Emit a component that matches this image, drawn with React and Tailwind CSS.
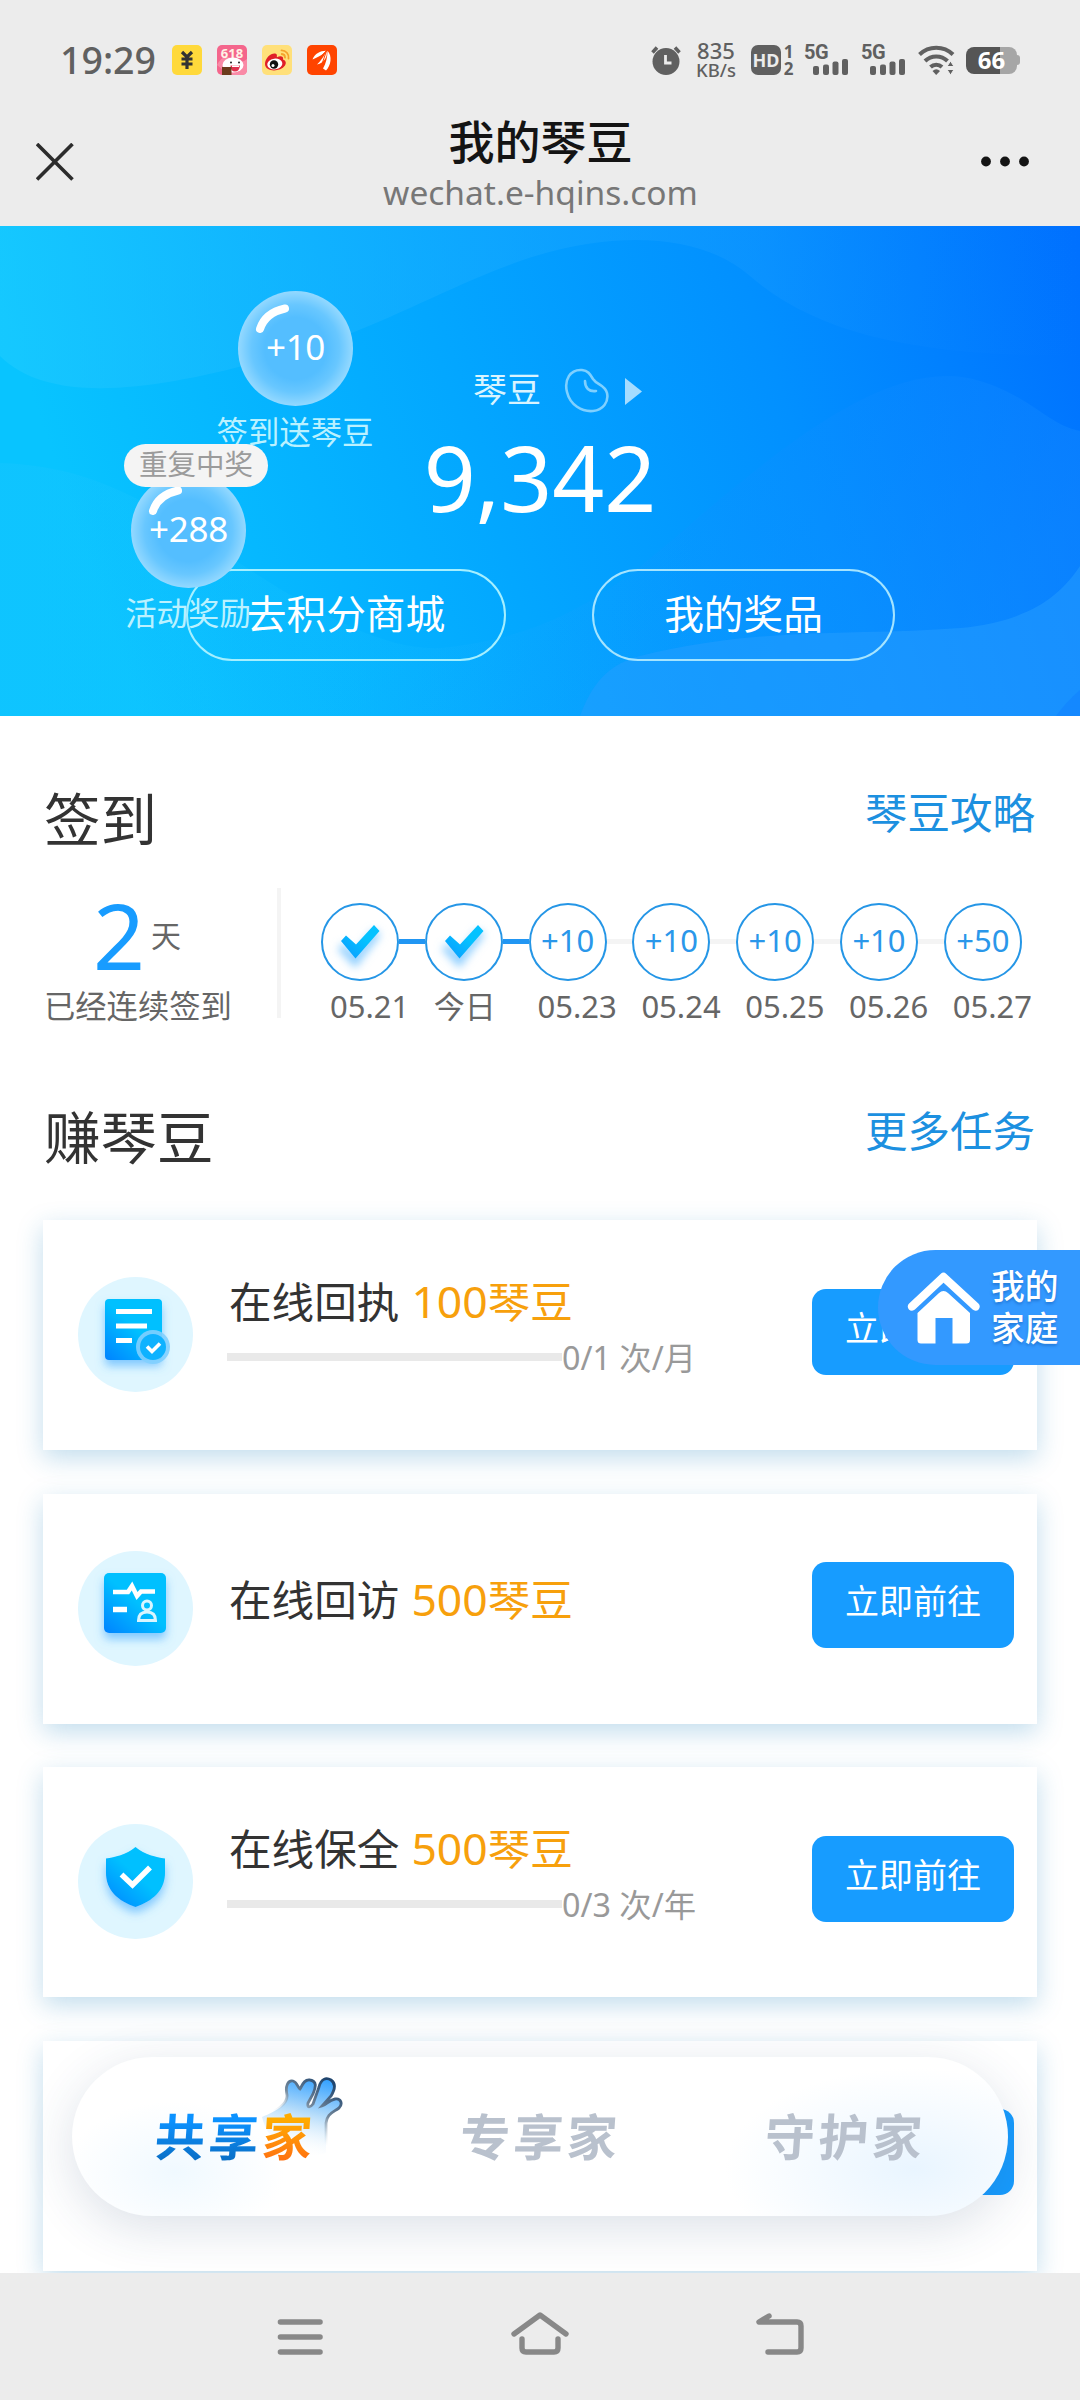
import React from "react";

const SANS = "font-['Noto_Sans','Noto_Sans_CJK_SC',sans-serif]";

function AppIcons() {
  return (
    <div className="flex gap-[15px]">
      <svg width="30" height="30" viewBox="0 0 30 30">
        <rect width="30" height="30" rx="5" fill="#ffd93b" />
        <path d="M10 7l5 5 5-5M15 12v12M9.5 14h11M9.5 19h11" stroke="#333" strokeWidth="3.2" fill="none" />
      </svg>
      <svg width="30" height="30" viewBox="0 0 30 30">
        <rect width="30" height="30" rx="5" fill="#f4668c" />
        <path d="M0 20Q6 8 15 14T30 14V25Q30 30 25 30H12Z" fill="#f98aa6" />
        <text x="15" y="13" textAnchor="middle" fontSize="13" fontWeight="700" fill="#fff3e6" className={SANS}>618</text>
        <ellipse cx="16" cy="20" rx="10.5" ry="7.5" fill="#fff" />
        <circle cx="14" cy="17.5" r="1" fill="#222" />
        <circle cx="22" cy="17.5" r="1" fill="#222" />
        <path d="M13.500 20.500h9.500q-.5 6-5 6t-4.500-6z" fill="#e0304e" />
        <path d="M15 20.500h7v1.500h-7z" fill="#fff" />
        <rect x="5" y="22" width="9.500" height="8" fill="#6b3b1c" />
      </svg>
      <svg width="30" height="30" viewBox="0 0 30 30">
        <rect width="30" height="30" rx="5" fill="#ffe07a" />
        <path d="M3 19C3 13 9 8 13 8.500C16 9 14.500 12 15 12.300C18 10.500 22 11 21 14.500C24 15.500 24.500 18 23 20.500C18 27.500 3 27 3 19Z" fill="#e01f28" />
        <ellipse cx="12.800" cy="19" rx="7.600" ry="5.400" transform="rotate(-8 12.800 19)" fill="#fff" />
        <circle cx="12" cy="19.500" r="4.200" fill="#111" />
        <circle cx="11" cy="20.500" r="1.500" fill="#fff" />
        <path d="M19.500 5.300A7 7 0 0 1 26.500 13.500M19.800 9A3.500 3.500 0 0 1 23 12.600" stroke="#f5a32b" strokeWidth="1.800" fill="none" strokeLinecap="round" />
      </svg>
      <svg width="30" height="30" viewBox="0 0 30 30">
        <rect width="30" height="30" rx="5" fill="#ff4400" />
        <path d="M5.500 14.500C8 8.500 13 6 19 5.800C16.500 9.500 11.500 12 5.500 14.500Z" fill="#fff" />
        <path d="M10 19.500C13.500 16.500 17 11.500 19.500 5.800C21 11 17.500 18 10 19.500Z" fill="#fff" />
        <path d="M16 23.500C19 18.500 20.500 12 20.500 5.800C25.500 11 24 20.500 19 25.500Z" fill="#fff" />
        <path d="M8.500 17L19.500 5.800L14 22" stroke="#ff4400" strokeWidth="1" fill="none" />
      </svg>
    </div>
  );
}

function Signal() {
  return (
    <div className="h-[30px] w-[45px]">
      <div className="h-[14px] text-[20px] leading-[15px] font-bold tracking-[-0.5px] font-['Roboto']">5G</div>
      <svg className="ml-[9px]" width="36" height="16" viewBox="0 14 36 16" fill="#606060">
        <rect x="0" y="21" width="6" height="9" rx="2" />
        <rect x="10" y="19.500" width="6" height="10.500" rx="2" />
        <rect x="19.500" y="16.500" width="6" height="13.500" rx="2" />
        <rect x="29" y="14" width="6" height="16" rx="2" />
      </svg>
    </div>
  );
}

function StatusBar() {
  return (
    <div className="flex h-[120px] items-center pl-[60px] pr-[60px] text-[#606060]">
      <div className="w-[112px] text-[37.500px] leading-[40px] font-medium">19:29</div>
      <AppIcons />
      <div className="ml-auto flex items-center">
        <svg width="30" height="30" viewBox="0 0 30 30">
          <circle cx="15" cy="16.500" r="13.500" fill="#606060" />
          <path d="M1.500 7.500L6 2.500M28.500 7.500L24 2.500" stroke="#606060" strokeWidth="3.500" />
          <path d="M14.500 10v8h6" stroke="#ececec" strokeWidth="2.800" fill="none" />
        </svg>
        <div className="ml-[13px] w-[44px] text-center font-medium">
          <div className="text-[22px] leading-[19px]">835</div>
          <div className="text-[18.500px] leading-[20px]">KB/s</div>
        </div>
        <div className="ml-[13px] flex h-[30px] w-[30px] items-center justify-center rounded-[7px] bg-[#606060] text-[18px] leading-none font-bold text-[#ececec]">HD</div>
        <div className="ml-[2px] w-[11px] text-center text-[17px] leading-[17px] font-bold">
          <div>1</div>
          <div>2</div>
        </div>
        <div className="ml-[10px]"><Signal /></div>
        <div className="ml-[12px]"><Signal /></div>
        <svg className="ml-[12px]" width="38" height="30" viewBox="0 0 38 30" fill="none" stroke="#606060" strokeWidth="4">
          <path d="M1.500 9.500A24 24 0 0 1 35 9.500M7 16A16 16 0 0 1 29.500 16M12.500 22A8.500 8.500 0 0 1 24 22" />
          <path d="M14.500 26Q18.200 22.500 22 26L18.200 30Z" fill="#606060" stroke="none" />
          <path d="M29 21.500l3.500-5.500 3.500 5.500zM29 24.500h7l-3.500 5.500z" fill="#606060" stroke="#ececec" strokeWidth="1" />
        </svg>
        <div className="ml-[10px] flex items-center">
          <div className="flex h-[27px] w-[51px] items-center justify-center rounded-[8px] bg-[linear-gradient(90deg,#555_66%,#a6a6a6_66%)] text-[24px] leading-none font-bold text-white">66</div>
          <div className="h-[10px] w-[3px] rounded-r bg-[#a6a6a6]" />
        </div>
      </div>
    </div>
  );
}

function TitleBar() {
  return (
    <div className="flex h-[106px] px-[36px]">
      <svg className="mt-[23px]" width="38" height="38" viewBox="0 0 38 38" stroke="#2c2c2c" strokeWidth="3.600">
        <path d="M1 1L36.500 36.500M36.500 1L1 36.500" />
      </svg>
      <div className="flex-1 pl-[26px] text-center">
        <div className="-mt-[8px] text-[46px] leading-[58px] font-medium text-[#141414]">我的琴豆</div>
        <div className="text-[33.500px] leading-[44px] text-[#777]">wechat.e-hqins.com</div>
      </div>
      <svg className="mt-[36px] mr-[3px]" width="60" height="12" viewBox="0 0 60 12" fill="#141414">
        <circle cx="5" cy="5.500" r="4.900" />
        <circle cx="24" cy="5.500" r="4.900" />
        <circle cx="43" cy="5.500" r="4.900" />
      </svg>
    </div>
  );
}

function HeroWaves() {
  return (
    <svg className="absolute inset-0" width="1080" height="490" viewBox="0 0 1080 490">
      <defs>
        <linearGradient id="sky" x1="0" y1="0.150" x2="1" y2="0">
          <stop offset="0" stopColor="#08c4ff" />
          <stop offset="0.380" stopColor="#03a7ff" />
          <stop offset="0.680" stopColor="#0290ff" />
          <stop offset="1" stopColor="#0070ff" />
        </linearGradient>
        <linearGradient id="lobe" gradientUnits="userSpaceOnUse" x1="600" y1="200" x2="900" y2="480">
          <stop offset="0" stopColor="#168cff" stopOpacity="0.050" />
          <stop offset="1" stopColor="#168cff" stopOpacity="0.700" />
        </linearGradient>
        <linearGradient id="top" x1="0" y1="0" x2="1" y2="0">
          <stop offset="0" stopColor="#1ecbff" stopOpacity="0.600" />
          <stop offset="0.700" stopColor="#1a9bff" stopOpacity="0.350" />
          <stop offset="1" stopColor="#0a7cff" stopOpacity="0" />
        </linearGradient>
        <linearGradient id="left" x1="0" y1="0" x2="1" y2="0">
          <stop offset="0" stopColor="#1ac8ff" stopOpacity="0.350" />
          <stop offset="1" stopColor="#1ac8ff" stopOpacity="0" />
        </linearGradient>
      </defs>
      <rect width="1080" height="490" fill="url(#sky)" />
      <path d="M0 0H1080V130C920 130 820 110 750 50C700 6 610 4 520 35C450 60 400 90 330 115C200 155 60 190 0 130Z" fill="url(#top)" />
      <path d="M0 237C80 240 130 265 200 310C300 380 380 425 440 422C560 410 620 360 700 290C800 205 900 130 980 155C1030 170 1050 200 1080 205V490H0Z" fill="url(#lobe)" opacity="0.600" />
      <path d="M0 237C80 240 130 265 200 310C300 380 380 425 440 422C560 410 620 360 700 290V490H0Z" fill="url(#left)" />
      <path d="M580 490C588 470 600 440 640 430C760 400 860 410 960 402C1030 395 1060 370 1080 340V490Z" fill="#259dff" opacity="0.500" />
      <path d="M1056 490Q1066 476 1080 464V490Z" fill="#0f7fff" opacity="0.500" />
    </svg>
  );
}

function Bubble({ text }) {
  return (
    <div className="relative flex h-[115px] w-[115px] items-center justify-center rounded-full bg-[radial-gradient(circle_at_50%_50%,#54beff_38%,#68c7ff_54%,#92d8ff_70%)] text-[35px] leading-none text-white">
      <svg className="absolute left-[11px] top-[5px]" width="48" height="42" viewBox="0 0 48 42">
        <path d="M11 33Q16 17 36 12.500" stroke="#fff" strokeWidth="8" strokeLinecap="round" fill="none" />
      </svg>
      <span className="relative -mt-[4px] ml-[1px] tracking-[-0.300px]">{text}</span>
    </div>
  );
}

function Hero() {
  return (
    <section className="relative h-[490px] overflow-hidden text-white">
      <HeroWaves />
      <div className="relative pt-[141px]">
        <div className="flex h-[44px] items-center pl-[473px]">
          <span className="text-[34px] leading-[44px] text-[#d9f4ff]">琴豆</span>
          <svg className="ml-[23px] mt-[4px]" width="46" height="46" viewBox="0 0 46 46" fill="none" stroke="#7fd0ff" strokeWidth="2.600">
            <path d="M18 2C6 1 0 12 3 24C6 37 18 44 29 43C39 42 45 34 43 25C41 17 33 17 29 11C26 6 24 2.500 18 2Z" />
            <path d="M21 13C21 20 25 24 32 23" strokeLinecap="round" />
          </svg>
          <svg className="ml-[15px] mt-[5px]" width="17" height="27" viewBox="0 0 17 27">
            <path d="M0 0L17 13.500L0 27Z" fill="#a5dcff" />
          </svg>
        </div>
        <div className="mt-[20px] h-[92px] text-center text-[91px] leading-[92px]">9,342</div>
        <div className="mt-[46px] flex gap-[86px] pl-[186px] text-[39.700px] leading-[50px]">
          <button className="flex h-[92px] w-[320px] items-center justify-center rounded-full border-2 border-[#a5efff] pb-[2px]">去积分商城</button>
          <button className="flex h-[92px] w-[303px] items-center justify-center rounded-full border-2 border-[#a5e4ff] pb-[2px]">我的奖品</button>
        </div>
      </div>
      <div className="absolute left-[195px] top-[65px] flex w-[200px] flex-col items-center">
        <Bubble text="+10" />
        <div className="mt-[6px] text-[31.400px] leading-[40px] text-[#baf1ff]">签到送琴豆</div>
      </div>
      <div className="absolute left-[88px] top-[247px] flex w-[200px] flex-col items-center">
        <Bubble text="+288" />
        <div className="mt-[5px] text-[31.400px] leading-[40px] text-[#baf1ff]">活动奖励</div>
      </div>
      <div className="absolute left-[124px] top-[218px] flex h-[43px] w-[144px] items-center justify-center rounded-full bg-[#f4f4f4] pb-[3px] text-[28.500px] leading-none text-[#9b9b9b]">重复中奖</div>
    </section>
  );
}

function SectionHead({ title, link }) {
  return (
    <div className="flex h-[80px] items-center justify-between pl-[44px] pr-[45px]">
      <h2 className="-mt-[1px] text-[56.500px] leading-[80px] text-[#333]">{title}</h2>
      <a className="-mt-[15px] text-[42.500px] leading-[60px] text-[#1c90e0]">{link}</a>
    </div>
  );
}

function Check() {
  return (
    <svg width="56" height="60" viewBox="0 0 56 60" className="mt-[6px] overflow-visible">
      <defs>
        <linearGradient id="chk" x1="0" y1="1" x2="1" y2="0">
          <stop offset="0" stopColor="#0a98ff" />
          <stop offset="0.600" stopColor="#05c2ff" />
        </linearGradient>
        <filter id="soft" x="-50%" y="-50%" width="200%" height="200%"><feGaussianBlur stdDeviation="4" /></filter>
      </defs>
      <path d="M9 31L23 46L45 17" stroke="#8fcfff" strokeWidth="9" fill="none" filter="url(#soft)" />
      <path d="M9 26L14 20.500L24 29.500L42 10L47.500 16L23.500 43.500Z" fill="url(#chk)" />
    </svg>
  );
}

const DAYS = [
  { date: "05.21", done: true },
  { date: "今日", done: true },
  { date: "05.23", bonus: "+10" },
  { date: "05.24", bonus: "+10" },
  { date: "05.25", bonus: "+10" },
  { date: "05.26", bonus: "+10" },
  { date: "05.27", bonus: "+50" },
];

function SignIn() {
  return (
    <section className="pt-[64px]">
      <SectionHead title="签到" link="琴豆攻略" />
      <div className="flex h-[172px] pt-[28px]">
        <div className="w-[277px] shrink-0">
          <div className="flex h-[92px] items-start pl-[93px]">
            <span className="mt-[1px] text-[91px] leading-[92px] text-[#189cff]">2</span>
            <span className="ml-[6px] mt-[26px] text-[30px] leading-[44px] text-[#666]">天</span>
          </div>
          <div className="mt-[6px] pl-[44px] text-[31.300px] leading-[40px] text-[#666]">已经连续签到</div>
        </div>
        <div className="h-[130px] w-[4px] bg-[#f4f4f4]" />
        <div className="flex pl-[40px] pt-[15px]">
          {DAYS.map((d, i) => (
            <div key={d.date} className="w-[103.800px]">
              <div className="flex items-center">
                <div className="flex h-[78px] w-[78px] shrink-0 items-center justify-center rounded-full border-2 border-[#2596e6] text-[31px] leading-none text-[#2a97ea]">
                  {d.done ? <Check /> : <span className="-mt-[3px]">{d.bonus}</span>}
                </div>
                {i < 6 && <div className={d.done ? "mb-[2px] h-[5px] flex-1 bg-[#2196f3]" : "mb-[2px] h-[5px] flex-1 bg-[#f4f4f4]"} />}
              </div>
              <div className="mt-[5px] pl-[9px] text-[31px] leading-[40px] whitespace-nowrap text-[#666]">{d.date}</div>
            </div>
          ))}
        </div>
      </div>
    </section>
  );
}

function IconDefs() {
  return (
    <svg width="0" height="0" className="absolute">
      <defs>
        <linearGradient id="ico" x1="0" y1="1" x2="0.700" y2="0.200">
          <stop offset="0" stopColor="#0083ff" />
          <stop offset="0.700" stopColor="#00c0ff" />
        </linearGradient>
        <filter id="drop" x="-40%" y="-40%" width="180%" height="180%">
          <feDropShadow dx="0" dy="6" stdDeviation="5" floodColor="#3fa9ff" floodOpacity="0.600" />
        </filter>
      </defs>
    </svg>
  );
}

function ReceiptIcon() {
  return (
    <svg width="115" height="115" viewBox="0 0 115 115">
      <g filter="url(#drop)">
        <rect x="27" y="22" width="57" height="61" rx="4" fill="url(#ico)" />
      </g>
      <path d="M38 34.500h36M38 49h31M38 63.500h16" stroke="#fff" strokeWidth="5" />
      <circle cx="75" cy="70" r="17" fill="#7fcfff" opacity="0.900" />
      <circle cx="75" cy="70" r="13" fill="#0eb2ff" />
      <path d="M69 69.500l5 5 8-8" stroke="#fff" strokeWidth="3.600" fill="none" />
    </svg>
  );
}

function VisitIcon() {
  return (
    <svg width="115" height="115" viewBox="0 0 115 115">
      <rect x="26" y="22" width="62" height="60" rx="5" fill="url(#ico)" filter="url(#drop)" />
      <path d="M35 41H50L54 35L59 45L63 40.500H77" stroke="#fff" strokeWidth="4.500" fill="none" />
      <path d="M35 58.500H49" stroke="#fff" strokeWidth="5.500" />
      <circle cx="69" cy="54.500" r="4.500" stroke="#d8f5ff" strokeWidth="3" fill="none" />
      <path d="M60.500 69.500q0-8.500 8.500-8.500t8.500 8.500z" stroke="#d8f5ff" strokeWidth="3" fill="none" />
    </svg>
  );
}

function ShieldIcon() {
  return (
    <svg width="115" height="115" viewBox="0 0 115 115">
      <path d="M57.500 23C67 31 78 33 87 34.500V49C87 66 75 77 57.500 83C40 77 28 66 28 49V34.500C37 33 48 31 57.500 23Z" fill="url(#ico)" filter="url(#drop)" />
      <path d="M43.500 50.500l11 10.500 17.500-17.500" stroke="#fff" strokeWidth="5.500" fill="none" />
    </svg>
  );
}

const TASKS = [
  { title: "在线回执", reward: "100", count: "0/1 次/月", Icon: ReceiptIcon },
  { title: "在线回访", reward: "500", Icon: VisitIcon },
  { title: "在线保全", reward: "500", count: "0/3 次/年", Icon: ShieldIcon },
  {},
];

function TaskCard({ title, reward, count, Icon }) {
  return (
    <div className="flex h-[230px] items-center bg-white pl-[35px] pr-[23px] shadow-[0_8px_24px_rgba(30,130,190,0.270)]">
      {Icon && (
        <div className="-mt-[1px] h-[115px] w-[115px] rounded-full bg-[#dff6ff]">
          <Icon />
        </div>
      )}
      {title && (
        <div className={count ? "ml-[34px] -mt-[22px]" : "ml-[34px] -mt-[20px]"}>
          <div className="pl-[2px] text-[42.600px] leading-[60px] whitespace-nowrap text-[#333]">
            {title}
            <span className="ml-[12px] text-[#f7a00c]"><span className="text-[44.500px]">{reward}</span>琴豆</span>
          </div>
          {count && (
            <div className="mt-[6px] flex h-[40px] items-center">
              <div className="h-[8px] w-[335px] bg-[#e9e9e9]" />
              <span className="text-[32.300px] leading-[40px] whitespace-nowrap text-[#999]">{count}</span>
            </div>
          )}
        </div>
      )}
      <button className="-mt-[7px] ml-auto h-[86px] w-[202px] rounded-[14px] bg-[#179cff] pb-[8px] text-[34px] leading-[44px] text-white">立即前往</button>
    </div>
  );
}

function FamilyTab() {
  return (
    <div className="absolute right-0 top-[1250px] flex h-[115px] w-[202px] items-center rounded-l-full bg-[#3399ff] pl-[29px]">
      <svg width="74" height="74" viewBox="0 0 74 74" className="shrink-0">
        <path d="M5 35.500L36.500 6L68.500 35.500" stroke="#fff" strokeWidth="8.500" strokeLinecap="round" strokeLinejoin="round" fill="none" />
        <path d="M36.500 20Q39 20 41 22L63 42V69Q63 72.500 59.500 72.500H45.500V47H28.500V72.500H14Q10.500 72.500 10.500 69V42L32 22Q34 20 36.500 20Z" fill="#fff" />
      </svg>
      <div className="ml-[10px] text-[33.700px] leading-[41.500px] font-medium text-white [text-shadow:0_2px_3px_rgba(0,60,140,0.350)]">
        <div>我的</div>
        <div>家庭</div>
      </div>
    </div>
  );
}

function Hand() {
  return (
    <svg className="absolute left-[188px] top-[20px]" width="86" height="84" viewBox="0 0 86 84">
      <defs>
        <linearGradient id="hand" x1="0.700" y1="0" x2="0.450" y2="1">
          <stop offset="0" stopColor="#38a3ff" />
          <stop offset="0.450" stopColor="#b5dcfa" />
          <stop offset="1" stopColor="#fff" stopOpacity="0" />
        </linearGradient>
        <linearGradient id="handEdge" x1="0.800" y1="0" x2="0.400" y2="0.600">
          <stop offset="0" stopColor="#20456e" />
          <stop offset="0.550" stopColor="#74889b" />
          <stop offset="1" stopColor="#c8dbe8" stopOpacity="0" />
        </linearGradient>
      </defs>
      <path d="M2 40C17 34 28 27 27 18C25 9 28 3 33 4C37 5 38 11 40 12C42 9 44 2 50 3C57 4 56 10 53 17L48 26C47 31 50 31 53 27L59 10C61 2 66 0 71 3C77 7 74 14 71 19L62 29C66 28 69 23 75 22C81 21 83 27 79 31C72 36 67 37 66 46V76C50 82 10 76 2 40Z" fill="url(#hand)" stroke="url(#handEdge)" strokeWidth="2.800" />
    </svg>
  );
}

function BottomTabs() {
  return (
    <div className="absolute left-[72px] top-[2057px] h-[159px] w-[936px] rounded-full bg-white bg-[radial-gradient(ellipse_190px_100px_at_90%_70%,#e9f5ff,transparent),radial-gradient(ellipse_110px_70px_at_11%_72%,#f0f9ff,transparent)] shadow-[0_12px_50px_rgba(40,70,110,0.160)]">
      <Hand />
      <div className="flex h-full items-center pl-[83px] text-[50px] leading-[60px] font-bold tracking-[3.500px] text-[#b9c1cd] [&>span]:inline-block [&>span]:-skew-x-4">
        <span className="w-[305px]">
          <span className="bg-linear-to-b from-[#0c92ff] from-25% to-[#0a6fc6] to-85% bg-clip-text text-transparent">共享</span>
          <span className="bg-linear-to-b from-[#ffab00] from-25% to-[#ff7010] to-85% bg-clip-text text-transparent">家</span>
        </span>
        <span className="w-[305px]">专享家</span>
        <span>守护家</span>
      </div>
    </div>
  );
}

function SystemNav() {
  return (
    <div className="relative flex h-[127px] bg-[#ececec] pt-[38px]">
      <svg className="ml-[277px]" width="47" height="46" viewBox="0 0 47 46" stroke="#888" strokeWidth="5.600" strokeLinecap="round">
        <path d="M3.500 11H43M3.500 26H43M3.500 41H43" />
      </svg>
      <svg className="ml-[187px]" width="58" height="46" viewBox="0 0 58 46" fill="none" stroke="#888" strokeWidth="5.400" strokeLinecap="round" strokeLinejoin="round">
        <path d="M3 23L29 4L55 23M11 28V37Q11 41 15 41H43Q47 41 47 37V28" />
      </svg>
      <svg className="ml-[186px]" width="50" height="46" viewBox="0 0 50 46" fill="none" stroke="#888" strokeWidth="5.400" strokeLinecap="round" strokeLinejoin="round">
        <path d="M14 5L4 11H42Q46 11 46 15V37Q46 41 42 41H13" />
      </svg>
    </div>
  );
}

export default function App() {
  return (
    <div className={`relative h-[2400px] w-[1080px] overflow-hidden bg-white ${SANS}`}>
      <IconDefs />
      <header className="bg-[#ececec]">
        <StatusBar />
        <TitleBar />
      </header>
      <main className="h-[2047px] overflow-hidden">
        <Hero />
        <SignIn />
        <section className="pt-[66px]">
          <SectionHead title="赚琴豆" link="更多任务" />
          <div className="mt-[42px] flex flex-col gap-[43.500px] px-[43px]">
            {TASKS.map((t, i) => (
              <TaskCard key={i} {...t} />
            ))}
          </div>
        </section>
      </main>
      <FamilyTab />
      <BottomTabs />
      <SystemNav />
    </div>
  );
}
